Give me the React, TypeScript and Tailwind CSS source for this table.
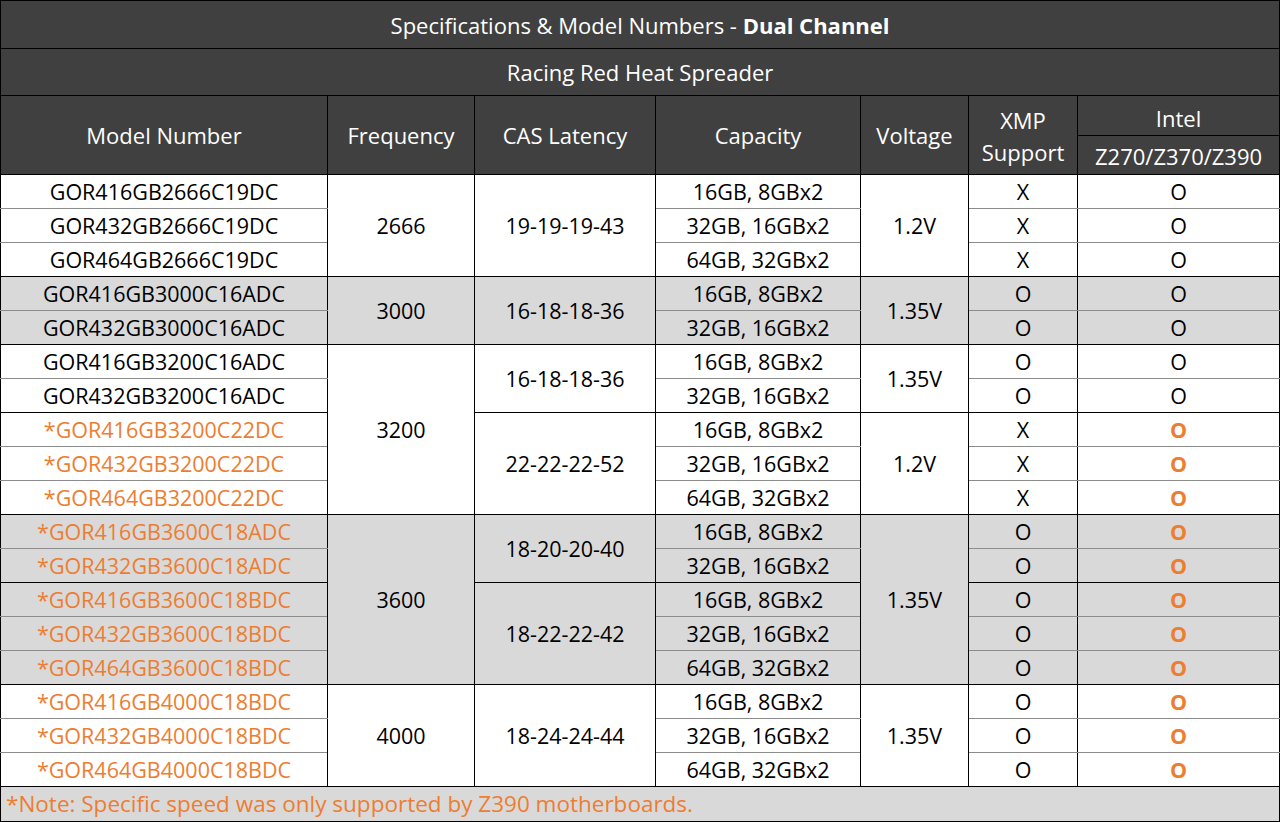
import React from 'react';

type Row = {
  model: string;
  star?: boolean;
  freq?: { text: string; span: number };
  cas?: { text: string; span: number };
  cap: string;
  volt?: { text: string; span: number };
  xmp: string;
  gray?: boolean;
  groupEnd?: boolean;
};

const rows: Row[] = [
  { model: 'GOR416GB2666C19DC', freq: { text: '2666', span: 3 }, cas: { text: '19-19-19-43', span: 3 }, cap: '16GB, 8GBx2', volt: { text: '1.2V', span: 3 }, xmp: 'X' },
  { model: 'GOR432GB2666C19DC', cap: '32GB, 16GBx2', xmp: 'X' },
  { model: 'GOR464GB2666C19DC', cap: '64GB, 32GBx2', xmp: 'X', groupEnd: true },
  { model: 'GOR416GB3000C16ADC', gray: true, freq: { text: '3000', span: 2 }, cas: { text: '16-18-18-36', span: 2 }, cap: '16GB, 8GBx2', volt: { text: '1.35V', span: 2 }, xmp: 'O' },
  { model: 'GOR432GB3000C16ADC', gray: true, cap: '32GB, 16GBx2', xmp: 'O', groupEnd: true },
  { model: 'GOR416GB3200C16ADC', freq: { text: '3200', span: 5 }, cas: { text: '16-18-18-36', span: 2 }, cap: '16GB, 8GBx2', volt: { text: '1.35V', span: 2 }, xmp: 'O' },
  { model: 'GOR432GB3200C16ADC', cap: '32GB, 16GBx2', xmp: 'O', groupEnd: true },
  { model: 'GOR416GB3200C22DC', star: true, cas: { text: '22-22-22-52', span: 3 }, cap: '16GB, 8GBx2', volt: { text: '1.2V', span: 3 }, xmp: 'X' },
  { model: 'GOR432GB3200C22DC', star: true, cap: '32GB, 16GBx2', xmp: 'X' },
  { model: 'GOR464GB3200C22DC', star: true, cap: '64GB, 32GBx2', xmp: 'X', groupEnd: true },
  { model: 'GOR416GB3600C18ADC', star: true, gray: true, freq: { text: '3600', span: 5 }, cas: { text: '18-20-20-40', span: 2 }, cap: '16GB, 8GBx2', volt: { text: '1.35V', span: 5 }, xmp: 'O' },
  { model: 'GOR432GB3600C18ADC', star: true, gray: true, cap: '32GB, 16GBx2', xmp: 'O', groupEnd: true },
  { model: 'GOR416GB3600C18BDC', star: true, gray: true, cas: { text: '18-22-22-42', span: 3 }, cap: '16GB, 8GBx2', xmp: 'O' },
  { model: 'GOR432GB3600C18BDC', star: true, gray: true, cap: '32GB, 16GBx2', xmp: 'O' },
  { model: 'GOR464GB3600C18BDC', star: true, gray: true, cap: '64GB, 32GBx2', xmp: 'O', groupEnd: true },
  { model: 'GOR416GB4000C18BDC', star: true, freq: { text: '4000', span: 3 }, cas: { text: '18-24-24-44', span: 3 }, cap: '16GB, 8GBx2', volt: { text: '1.35V', span: 3 }, xmp: 'O' },
  { model: 'GOR432GB4000C18BDC', star: true, cap: '32GB, 16GBx2', xmp: 'O' },
  { model: 'GOR464GB4000C18BDC', star: true, cap: '64GB, 32GBx2', xmp: 'O', groupEnd: true },
];

const cell = 'border border-black text-center align-middle p-0 leading-none';
const head = `${cell} font-normal`;

export default function App() {
  return (
    <div className="w-[1280px] h-[822px] bg-white overflow-hidden font-['Open_Sans',sans-serif] text-[21.5px] text-black">
      <table className="w-[1279px] border-collapse table-fixed">
        <colgroup>
          <col className="w-[327px]" />
          <col className="w-[147px]" />
          <col className="w-[181px]" />
          <col className="w-[205px]" />
          <col className="w-[108px]" />
          <col className="w-[109px]" />
          <col className="w-[202px]" />
        </colgroup>
        <thead className="bg-[#404040] text-white text-[22px]">
          <tr className="h-[48px]">
            <th colSpan={7} className={head}>
              Specifications &amp; Model Numbers - <span className="font-bold">Dual Channel</span>
            </th>
          </tr>
          <tr className="h-[47px]">
            <th colSpan={7} className={head}>Racing Red Heat Spreader</th>
          </tr>
          <tr className="h-[40px]">
            <th rowSpan={2} className={head}>Model Number</th>
            <th rowSpan={2} className={head}>Frequency</th>
            <th rowSpan={2} className={head}>CAS Latency</th>
            <th rowSpan={2} className={head}>Capacity</th>
            <th rowSpan={2} className={head}>Voltage</th>
            <th rowSpan={2} className={`${head} !leading-[32px] pt-[2px]`}>XMP<br />Support</th>
            <th className={`${head} pt-[4px]`}>Intel</th>
          </tr>
          <tr className="h-[39px]">
            <th className={`${head} pt-[2px]`}>Z270/Z370/Z390</th>
          </tr>
        </thead>
        <tbody>
          {rows.map((r, i) => {
            const bg = r.gray ? 'bg-[#d9d9d9]' : 'bg-white';
            const bottom = r.groupEnd ? 'border-b-black' : 'border-b-[#8c8c8c]';
            return (
              <tr key={i} className={`h-[34px] ${bg}`}>
                <td className={`${cell} ${bottom} ${r.star ? 'text-[#ed7d31]' : ''}`}>
                  {r.star ? '*' : ''}{r.model}
                </td>
                {r.freq && <td rowSpan={r.freq.span} className={cell}>{r.freq.text}</td>}
                {r.cas && <td rowSpan={r.cas.span} className={cell}>{r.cas.text}</td>}
                <td className={`${cell} ${bottom}`}>{r.cap}</td>
                {r.volt && <td rowSpan={r.volt.span} className={cell}>{r.volt.text}</td>}
                <td className={`${cell} ${bottom}`}>{r.xmp}</td>
                <td className={`${cell} ${bottom} ${r.star ? 'text-[#ed7d31] font-bold' : ''}`}>O</td>
              </tr>
            );
          })}
          <tr className="h-[35px] bg-[#d9d9d9]">
            <td colSpan={7} className={`${cell} text-left pl-[5px] text-[#ed7d31] text-[22.5px]`}>
              *Note: Specific speed was only supported by Z390 motherboards.
            </td>
          </tr>
        </tbody>
      </table>
    </div>
  );
}
